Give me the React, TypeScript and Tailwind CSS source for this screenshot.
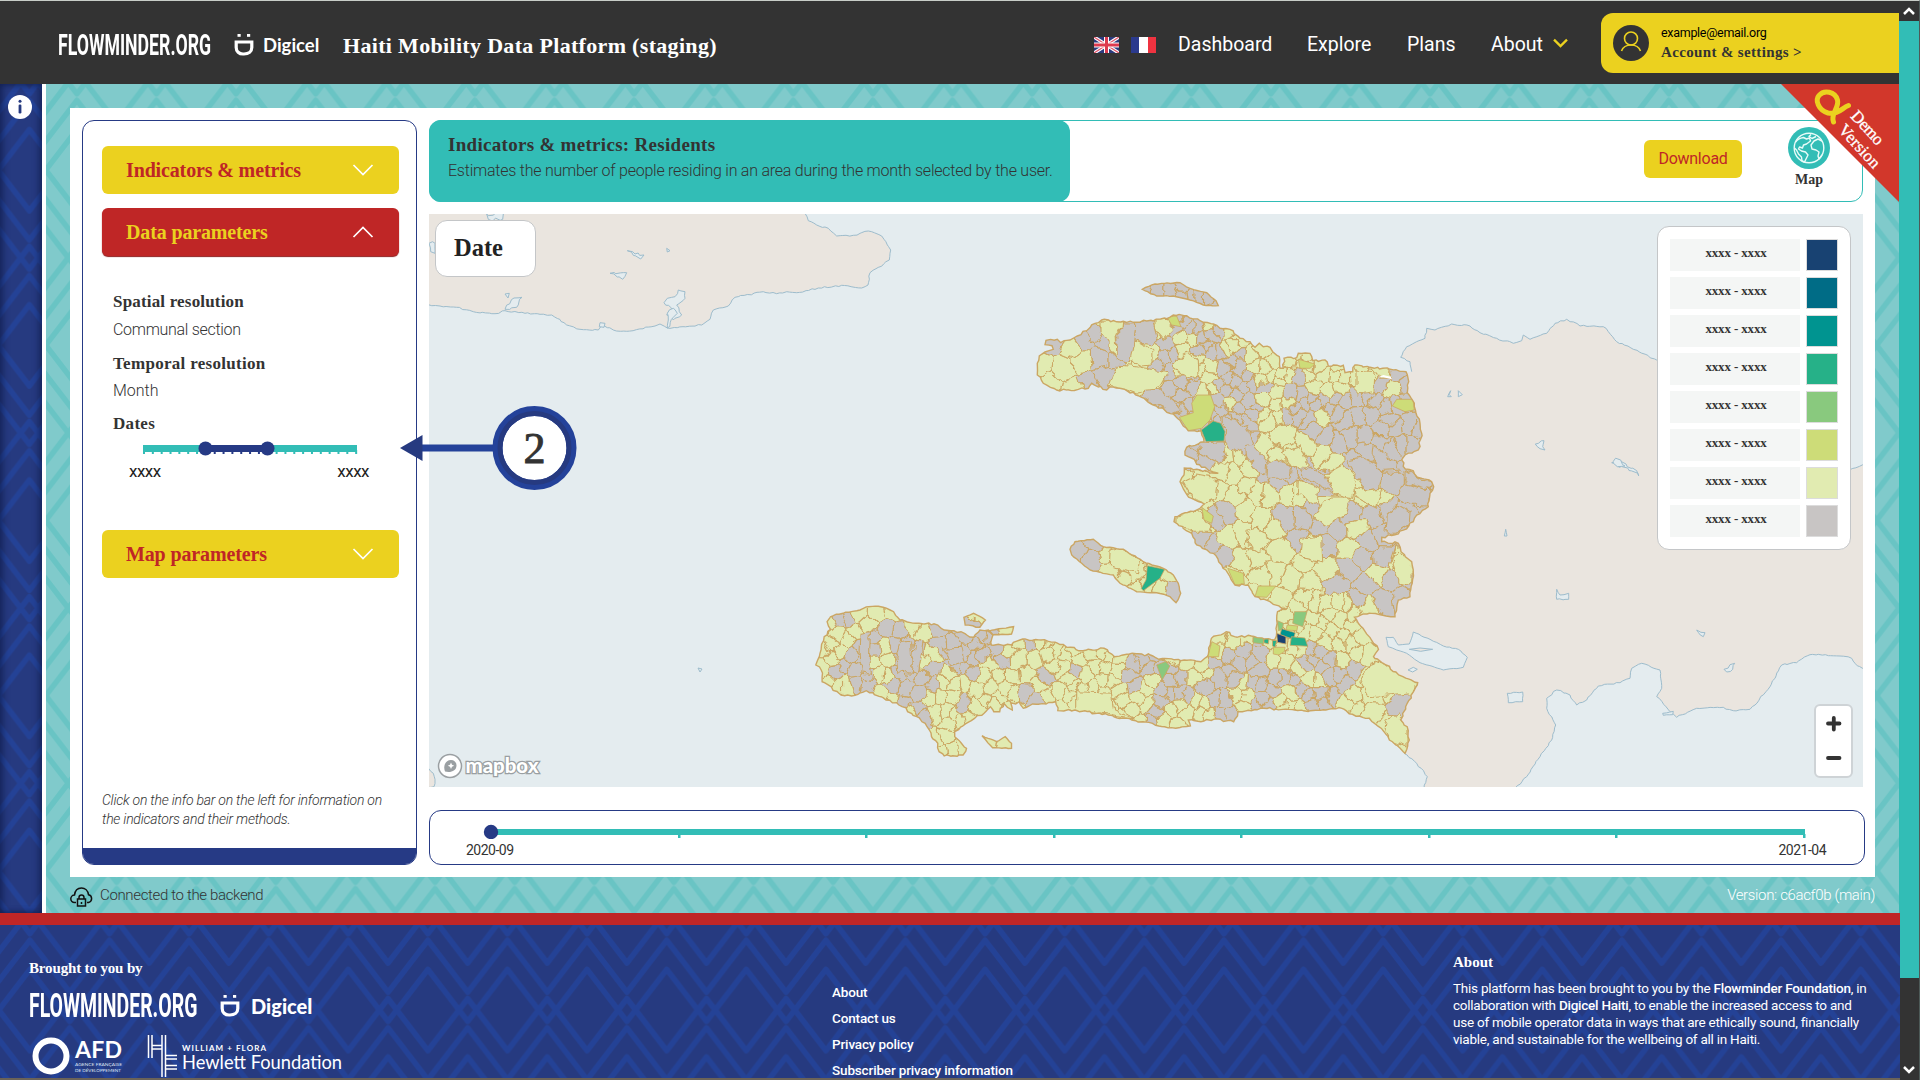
import React from "react";

type Pt = [number, number];

const SERIF = "font-['Liberation_Serif','Noto_Serif',serif]";

/* ---------- deterministic randomness ---------- */
function makeRandom(seed: number) {
  let s = seed >>> 0;
  return () => {
    s = (s + 0x6d2b79f5) >>> 0;
    let t = s;
    t = Math.imul(t ^ (t >>> 15), t | 1);
    t ^= t + Math.imul(t ^ (t >>> 7), t | 61);
    return ((t ^ (t >>> 14)) >>> 0) / 4294967296;
  };
}

const pairs = (s: string): Pt[] => s.trim().split(/\s+/).map((p) => p.split(",").map(Number) as Pt);
const toPath = (pts: Pt[], close = true) => "M" + pts.map((p) => p[0].toFixed(1) + "," + p[1].toFixed(1)).join("L") + (close ? "Z" : "");

/* sheet coordinates -> map pixels */
const north = (s: string): Pt[] => pairs(s).map(([x, y]) => [1000 + x / 3, 260 + y / 3]);
const south = (s: string): Pt[] => pairs(s).map(([x, y]) => [780 + x / 2.3758, 560 + y / 3]);
const west = (s: string): Pt[] => pairs(s).map(([x, y]) => [420 + x / 3, 200 + y / 3]);
const east = (s: string): Pt[] => pairs(s).map(([x, y]) => [1380 + x / 3, 300 + y / 3]);

function roughen(pts: Pt[], seed: number, amp: number, close = true): Pt[] {
  const rnd = makeRandom(seed);
  const out: Pt[] = [];
  const n = close ? pts.length : pts.length - 1;
  for (let i = 0; i < n; i++) {
    const a = pts[i];
    const b = pts[(i + 1) % pts.length];
    const len = Math.hypot(b[0] - a[0], b[1] - a[1]);
    out.push(a);
    const steps = Math.floor(len / 3);
    for (let k = 1; k < steps; k++) {
      const t = k / steps;
      out.push([a[0] + (b[0] - a[0]) * t + (rnd() - 0.5) * amp, a[1] + (b[1] - a[1]) * t + (rnd() - 0.5) * amp]);
    }
  }
  if (!close) out.push(pts[pts.length - 1]);
  return out;
}

/* ---------- outlines ---------- */
const northCoast = north(
  "112,310 118,288 135,276 160,268 156,257 135,254 138,241 172,238 182,248 210,240 232,228 260,212 285,190 305,180 370,184 400,187 440,183 500,176 520,165 560,167 600,182 640,192 660,205 690,208 720,235 750,245 765,262 778,250 790,260 810,262 818,275 838,290 840,325 850,325 852,295 890,293 895,280 930,280 938,302 975,300 985,318 1030,316 1035,338 1058,335 1065,315 1110,322 1170,328 1218,335 1226,365 1222,398 1243,430 1248,460 1260,490 1265,520 1255,570 1215,585 1205,600 1216,627 1240,632 1252,652 1295,665 1301,680 1290,700 1285,740 1250,765 1240,785 1195,822 1145,832 1145,845 1195,850 1203,875 1235,905 1240,940 1230,1010 1195,1020 1185,1070",
);
const southCoast = south(
  "1440,168 1400,160 1365,172 1385,205 1405,240 1422,268 1410,290 1440,315 1470,345 1515,368 1505,395 1490,430 1475,480 1490,500 1495,540 1485,580 1455,545 1435,515 1400,475 1360,463 1335,445 1260,452 1150,445 1088,455 1078,485 1030,478 1000,485 970,480 975,498 940,505 900,498 885,490 845,482 780,465 700,450 660,452 655,425 632,432 600,432 578,445 568,425 560,432 548,428 552,450 540,442 532,430 522,455 508,455 500,440 485,460 450,485 415,515 415,530 443,565 435,585 390,588 378,575 375,550 360,530 355,510 345,490 325,470 290,440 240,410 205,392 170,408 140,400 100,365 98,330 85,315 95,280 105,230 120,208 112,185 120,170 150,160 190,150 210,140 245,142 270,155 285,180 330,190 375,195 390,210 430,215 460,232 475,210 495,210 506,225 502,255 550,255 570,240 620,240 660,250 690,262 720,272 770,265 795,290 830,282 880,285 900,298 960,300 1000,305 1015,290 1025,235 1060,215 1080,230 1120,228 1175,240 1180,215 1180,180 1182,155 1200,145",
);
const gulfCoast = north(
  "845,1045 810,1025 765,1010 745,975 705,975 690,950 665,915 640,880 590,855 575,820 522,785 525,770 600,745 612,732 575,715 555,695 540,665 552,645 553,624 600,630 655,640 640,636 590,613 583,598 555,585 560,562 595,552 612,545 603,512 565,512 545,490 520,462 450,430 425,412 380,392 330,380 320,390 275,370 265,385 235,388 170,390 130,370 112,345",
);
const OUTLINES: Pt[][] = [
  roughen([...northCoast, ...southCoast, ...gulfCoast], 5, 2.2),
  roughen(north("427,88 465,72 540,68 570,85 620,98 648,122 655,137 610,135 570,120 520,108 470,108"), 6, 1),
  roughen(north("210,868 225,845 280,838 310,860 370,868 430,905 490,925 520,945 535,970 542,1000 528,1028 510,1010 470,998 410,995 360,970 340,945 270,930 245,910 215,885"), 7, 1),
  roughen(south("437,172 460,160 488,180 475,202 440,195"), 8, 1),
  roughen(south("492,212 520,206 555,200 550,222 505,224"), 9, 1),
  roughen(south("480,527 515,545 535,530 550,550 550,565 505,563"), 10, 1),
];

const cubaCoast = west(
  "1155,40 1165,62 1190,75 1225,85 1250,108 1300,106 1345,93 1385,108 1412,150 1408,180 1350,218 1344,255 1325,264 1265,256 1195,264 1130,278 1100,275 1070,281 1030,275 945,292 925,318 880,330 870,358 845,375 742,384 720,372 705,378 620,394 580,390 550,376 535,390 480,388 440,375 395,345 360,343 315,340 255,332 225,341 160,335 110,322 60,318 25,314",
);
const cubaLand = [...roughen(cubaCoast, 20, 1.6, false)];

const dominicanNorth = roughen(
  east("95,215 90,185 62,172 80,140 135,115 140,85 165,90 215,72 270,78 300,98 350,115 400,130 425,122 430,105 450,118 500,100 525,70 560,58 600,78 670,80 710,125 760,148 830,180 1000,260 1200,400 1350,530 1412,508 1455,493"),
  21,
  1.6,
  false,
);
const dominicanSouth = roughen(
  east("1455,1112 1425,1090 1415,1075 1380,1068 1290,1064 1250,1088 1205,1095 1170,1160 1125,1215 1110,1228 1060,1232 1030,1222 950,1225 890,1252 870,1235 830,1190 845,1165 840,1110 785,1090 755,1105 750,1135 720,1148 655,1158 620,1200 590,1215 570,1185 530,1170 500,1195 500,1225 527,1275 515,1320 480,1370 440,1430 405,1466"),
  22,
  1.6,
  false,
);
const borderCoast = roughen(east("132,1466 142,1430 110,1390 72,1360"), 23, 1.2, false);
const dominicanLand = [...dominicanNorth, ...dominicanSouth, ...borderCoast, ...east("-20,1220 -100,1100 -100,500 -50,235")];

const LAKES: Pt[][] = [
  roughen(east("18,1012 40,1012 55,1035 88,1032 100,996 150,1018 190,1038 235,1048 262,1072 250,1102 190,1110 120,1088 80,1060 50,1050 25,1040"), 30, 0.8),
  roughen(east("382,1180 428,1176 428,1205 385,1208"), 31, 1),
  roughen(east("530,868 540,885 566,880 566,898 530,898"), 32, 1.4),
  roughen(east("466,432 492,422 488,440 495,450 480,446"), 33, 2),
  roughen(east("695,488 715,478 738,492 770,512 776,528 745,506 718,502"), 34, 4),
  roughen(east("700,484 722,480 735,498 712,500"), 52, 5),
  roughen(east("84,1110 100,1102 112,1108 98,1116"), 35, 0.8),
  roughen(east("1032,1108 1050,1094 1064,1090 1058,1108 1040,1116"), 36, 2.4),
  roughen(east("950,990 975,998 970,1010"), 37, 2),
  roughen(east("848,1240 880,1234 878,1244 850,1246"), 38, 0.8),
  roughen(east("203,290 212,272 208,284 214,290"), 39, 0.8),
  roughen(east("235,272 247,284 235,290"), 40, 0.8),
  roughen(east("373,708 377,688 381,708"), 41, 0.4),
  roughen(west("742,295 765,290 775,270 795,275 795,295 770,315 785,345 760,360 740,345 755,325 732,308"), 42, 2.4),
  roughen(west("742,340 760,325 772,340 760,352 742,384 745,360"), 51, 2.4),
  roughen(west("622,152 645,162 672,165 662,177 640,166"), 43, 3),
  roughen(west("570,220 620,218 608,238"), 44, 2),
  roughen(west("740,145 750,152 742,156"), 45, 1),
  roughen(west("200,42 250,42 248,58 205,58"), 46, 4),
  roughen(west("27,130 45,130 45,160 32,155"), 47, 4),
  roughen(west("282,294 306,292 290,322 255,328"), 48, 3),
  roughen(west("255,282 268,280 264,294"), 49, 2),
  roughen(west("540,368 555,370 552,382 538,380"), 50, 0.8),
];

/* ---------- administrative mesh ---------- */
/* [x, y, radius, share of cells without data] */
const NORTH_ZONES: number[][] = [
  [300, 300, 60, 0.95], [250, 350, 40, 1], [385, 230, 34, 1], [440, 220, 40, 1], [500, 280, 45, 1], [480, 410, 70, 1], [560, 390, 50, 1],
  [540, 215, 30, 0.7], [640, 240, 50, 0.9], [690, 320, 70, 0.85], [690, 430, 60, 0.9], [710, 510, 55, 1], [770, 390, 70, 0.55], [630, 575, 42, 1],
  [830, 640, 60, 1], [890, 440, 50, 0.85], [970, 500, 70, 0.9], [1090, 460, 80, 0.95], [1200, 500, 80, 1], [1205, 370, 30, 1], [1140, 390, 30, 1],
  [1110, 620, 80, 1], [1230, 700, 80, 1], [1190, 770, 60, 1], [940, 650, 50, 1], [890, 780, 60, 0.9], [660, 755, 45, 1], [600, 635, 30, 1],
  [640, 865, 38, 1], [990, 860, 40, 1], [1100, 820, 30, 1], [1170, 880, 40, 1], [1180, 980, 60, 1], [1050, 980, 50, 1], [1070, 910, 30, 1], [870, 930, 30, 1],
  [1080, 750, 40, 1], [240, 870, 50, 1], [515, 990, 26, 1], [540, 100, 90, 1], [190, 320, 65, 0.08], [140, 345, 16, 1], [340, 220, 30, 0], [420, 290, 30, 0], [410, 350, 65, 0],
  [560, 310, 40, 0], [610, 310, 30, 0], [490, 205, 26, 0], [560, 250, 26, 0.1], [620, 375, 30, 0], [700, 240, 45, 0.05], [860, 330, 70, 0.12],
  [960, 340, 60, 0.12], [1100, 350, 50, 0], [1165, 400, 20, 0], [870, 550, 70, 0], [790, 510, 50, 0], [830, 440, 22, 0.1], [1000, 590, 40, 0],
  [1030, 660, 45, 0], [1100, 710, 40, 0], [600, 690, 60, 0], [720, 620, 70, 0.05], [920, 700, 30, 0], [1000, 750, 50, 0], [780, 850, 110, 0], [580, 790, 50, 0],
  [700, 690, 60, 0], [840, 730, 50, 0], [760, 760, 50, 0],
  [930, 960, 70, 0], [1210, 930, 36, 0], [1090, 870, 30, 0], [1110, 945, 30, 0], [400, 930, 90, 0], [1120, 1040, 30, 0], [850, 1000, 60, 0], [1060, 820, 30, 0],
];
const SOUTH_ZONES: number[][] = [
  [155, 185, 24, 0.9], [200, 280, 26, 1], [295, 290, 34, 1], [320, 330, 34, 1], [340, 385, 34, 1], [180, 360, 24, 1], [415, 290, 28, 1],
  [350, 450, 24, 1], [480, 250, 26, 1], [580, 375, 40, 1], [440, 340, 20, 1], [820, 370, 26, 1], [850, 290, 36, 1], [950, 370, 30, 1], [910, 430, 34, 0.9],
  [1070, 300, 36, 1], [1150, 350, 36, 1], [1120, 300, 40, 0.9], [1290, 280, 36, 1], [1340, 350, 34, 1], [1255, 400, 20, 1], [1305, 410, 20, 1], [1480, 440, 26, 1],
  [250, 210, 30, 0.9], [1210, 345, 26, 1], [1050, 430, 26, 1], [1150, 400, 30, 1], [360, 205, 14, 1], [890, 480, 14, 1], [525, 290, 20, 0.9],
  [240, 155, 50, 0], [120, 270, 40, 0.1], [240, 300, 26, 0], [160, 390, 40, 0.1], [350, 290, 20, 0], [400, 440, 60, 0.05], [400, 540, 60, 0], [460, 390, 40, 0.1],
  [600, 290, 80, 0.15], [740, 400, 80, 0], [760, 300, 50, 0.3], [690, 340, 50, 0.1], [870, 400, 30, 0.2], [980, 330, 30, 0.1], [960, 470, 50, 0.1], [1100, 400, 30, 0],
  [1210, 400, 26, 0], [1210, 290, 40, 0.1], [1060, 250, 50, 0], [1350, 220, 80, 0], [1430, 350, 60, 0], [1400, 420, 50, 0], [1460, 520, 60, 0], [520, 400, 50, 0.1], [320, 200, 40, 0.1],
];
const ZONES: number[][] = [
  ...NORTH_ZONES.map(([x, y, r, p]) => [1000 + x / 3, 260 + y / 3, r / 3, p]),
  ...SOUTH_ZONES.map(([x, y, r, p]) => [780 + x / 2.3758, 560 + y / 3, r / 2.7, p]),
];

function spacing(x: number, y: number) {
  if (y < 420 && x > 1165 && x < 1345) return 8.5;
  if (y < 450 && x >= 1345) return 11;
  if (y < 430) return 14;
  if (y < 600) return x < 1240 ? 13.5 : 15;
  if (x > 1370) return 20;
  return 10;
}

function insidePoly(p: Pt, poly: Pt[]) {
  let c = false;
  for (let i = 0, j = poly.length - 1; i < poly.length; j = i++) {
    const a = poly[i];
    const b = poly[j];
    if (a[1] > p[1] !== b[1] > p[1] && p[0] < ((b[0] - a[0]) * (p[1] - a[1])) / (b[1] - a[1]) + a[0]) c = !c;
  }
  return c;
}

function buildCells() {
  const rnd = makeRandom(77);
  const seeds: Pt[] = [];
  for (let i = 0; i < 26000; i++) {
    const p: Pt = [810 + rnd() * 630, 280 + rnd() * 480];
    const d = spacing(p[0], p[1]) * (0.8 + rnd() * 0.5);
    if (seeds.some((q) => Math.hypot((q[0] - p[0]) * 1.15, (q[1] - p[1]) * 0.75) < d)) continue;
    if (!OUTLINES.some((o) => insidePoly(p, o))) continue;
    seeds.push(p);
  }
  return seeds.map((p) => {
    let poly: Pt[] = [[p[0] - 40, p[1] - 40], [p[0] + 40, p[1] - 40], [p[0] + 40, p[1] + 40], [p[0] - 40, p[1] + 40]];
    for (const q of seeds) {
      if (q === p || Math.abs(q[0] - p[0]) > 80 || Math.abs(q[1] - p[1]) > 80) continue;
      const mx = (p[0] + q[0]) / 2;
      const my = (p[1] + q[1]) / 2;
      const nx = q[0] - p[0];
      const ny = q[1] - p[1];
      const side = (v: Pt) => (v[0] - mx) * nx + (v[1] - my) * ny;
      const next: Pt[] = [];
      for (let i = 0; i < poly.length; i++) {
        const a = poly[i];
        const b = poly[(i + 1) % poly.length];
        const sa = side(a);
        const sb = side(b);
        if (sa <= 0) next.push(a);
        if (sa <= 0 !== sb <= 0) {
          const t = sa / (sa - sb);
          next.push([a[0] + (b[0] - a[0]) * t, a[1] + (b[1] - a[1]) * t]);
        }
      }
      poly = next;
    }
    let best = 1e9;
    let share = 0.2;
    for (const z of ZONES) {
      const d = Math.hypot(z[0] - p[0], z[1] - p[1]) / z[2];
      if (d < best) {
        best = d;
        share = z[3];
      }
    }
    return { d: toPath(poly), empty: rnd() < share };
  });
}
const CELLS = buildCells();

const HIGHLIGHTS: { d: string; fill: string }[] = [
  { fill: "#e1ebb1", d: toPath(north("350,316 390,318 460,328 505,335 480,378 410,402 380,390 325,378")) },
  { fill: "#e1ebb1", d: toPath(north("303,182 368,185 366,205 348,220 350,270 362,302 345,285 325,250 303,215")) },
  { fill: "#e1ebb1", d: toPath(north("396,245 420,250 440,262 455,275 457,315 420,318 388,300")) },
  { fill: "#e1ebb1", d: toPath(north("530,298 562,280 592,300 594,345 560,356 520,325")) },
  { fill: "#e1ebb1", d: toPath(north("465,180 500,178 515,208 490,235 465,205")) },
  { fill: "#c8c5c4", d: toPath(north("368,188 408,190 402,245 388,310 352,295 350,222 368,205")) },
  { fill: "#c8c5c4", d: toPath(north("408,188 458,184 474,238 455,255 402,245")) },
  { fill: "#c8c5c4", d: toPath(north("435,388 475,385 520,420 545,450 518,462 455,430 424,410")) },
  { fill: "#c8c5c4", d: toPath(north("672,470 700,475 740,500 758,550 735,588 675,550")) },
  { fill: "#c8c5c4", d: toPath(north("595,550 672,545 680,590 655,610 600,580")) },
  { fill: "#c8c5c4", d: toPath(north("736,560 760,555 800,600 798,645 775,635 740,590")) },
  { fill: "#c8c5c4", d: toPath(north("825,595 875,620 870,655 800,655 805,605")) },
  { fill: "#c8c5c4", d: toPath(north("930,615 1000,665 998,695 905,650 905,635")) },
  { fill: "#c8c5c4", d: toPath(north("1205,670 1290,690 1285,738 1235,735 1188,715")) },
  { fill: "#c8c5c4", d: toPath(north("1215,630 1250,652 1295,665 1290,690 1215,668")) },
  { fill: "#c8c5c4", d: toPath(north("1195,735 1230,755 1228,795 1195,820 1158,820 1162,765")) },
  { fill: "#c8c5c4", d: toPath(north("1145,640 1210,640 1210,675 1185,712 1140,685")) },
  { fill: "#c8c5c4", d: toPath(north("1120,555 1180,600 1205,630 1140,635 1115,595")) },
  { fill: "#c8c5c4", d: toPath(north("1040,600 1085,590 1130,615 1145,640 1135,685 1100,690 1070,650")) },
  { fill: "#e1ebb1", d: toPath(north("548,665 590,645 640,655 655,670 648,715 610,730 575,712")) },
  { fill: "#e1ebb1", d: toPath(north("975,645 1030,615 1070,655 1058,715 1000,700")) },
  { fill: "#e1ebb1", d: toPath(north("940,770 990,710 1052,712 1035,765 970,800")) },
  { fill: "#e1ebb1", d: toPath(north("845,575 905,555 925,610 900,632 868,612")) },
  { fill: "#e1ebb1", d: toPath(north("895,660 960,685 950,738 892,705")) },
  { fill: "#e1ebb1", d: toPath(north("745,810 775,805 812,835 795,865 775,872 740,850")) },
  { fill: "#e1ebb1", d: toPath(north("905,835 965,828 968,905 900,888")) },
  { fill: "#e1ebb1", d: toPath(north("1068,330 1125,335 1122,395 1068,402")) },
  { fill: "#e1ebb1", d: toPath(north("1062,680 1100,690 1145,685 1130,745 1065,712")) },
  { fill: "#e1ebb1", d: toPath(north("1195,870 1235,905 1232,975 1198,970 1175,900")) },
  { fill: "#e1ebb1", d: toPath(north("525,768 600,755 635,800 630,820 580,820 525,788")) },
  { fill: "#e1ebb1", d: toPath(north("330,875 370,868 425,905 418,938 328,920")) },
  { fill: "#e1ebb1", d: toPath(south("1395,320 1420,300 1515,368 1500,398 1400,410 1380,360")) },
  { fill: "#e1ebb1", d: toPath(south("1440,475 1470,465 1492,500 1492,560 1450,545 1435,510")) },
  { fill: "#e1ebb1", d: toPath(south("705,395 790,400 795,450 840,478 705,450")) },
  { fill: "#c8c5c4", d: toPath(south("190,220 215,215 212,310 215,340 190,335 188,270")) },
  { fill: "#c8c5c4", d: toPath(south("285,245 310,240 315,340 280,335 275,290")) },
  { fill: "#c8c5c4", d: toPath(south("320,240 340,245 328,345 312,338")) },
  { fill: "#c8c5c4", d: toPath(south("388,265 430,262 438,305 405,320 402,290")) },
  { fill: "#cddc78", d: toPath(north("590,405 632,405 644,440 630,480 605,505 565,512 538,472 580,458 575,430")) },
  { fill: "#26b188", d: toPath(north("640,483 662,490 675,515 672,543 618,545 604,510")) },
  { fill: "#cddc78", d: toPath(north("1190,418 1240,418 1243,450 1215,455 1177,438")) },
  { fill: "#cddc78", d: toPath(north("500,170 530,168 543,200 515,195")) },
  { fill: "#cddc78", d: toPath(north("895,298 945,312 930,325 900,325")) },
  { fill: "#cddc78", d: toPath(north("605,742 640,768 635,790 612,780")) },
  { fill: "#cddc78", d: toPath(north("683,925 730,940 733,972 705,975")) },
  { fill: "#cddc78", d: toPath(north("775,978 828,978 800,1012 765,1010")) },
  { fill: "#26b188", d: toPath(north("442,917 494,928 480,955 430,992 424,985 438,960")) },
  { fill: "#89c97e", d: toPath(south("1222,155 1252,155 1242,200 1218,190")) },
  { fill: "#89c97e", d: toPath(south("1182,182 1196,190 1194,208 1184,212")) },
  { fill: "#cddc78", d: toPath(south("1205,195 1230,198 1228,212 1202,210")) },
  { fill: "#009490", d: toPath(south("1192,206 1224,218 1220,238 1188,224")) },
  { fill: "#184272", d: toPath(south("1180,220 1202,230 1202,252 1182,247")) },
  { fill: "#26b188", d: toPath(south("1215,230 1247,234 1254,259 1212,256")) },
  { fill: "#26b188", d: toPath(south("1150,228 1162,232 1160,252 1150,248")) },
  { fill: "#26b188", d: toPath(south("1170,240 1180,242 1176,262 1170,258")) },
  { fill: "#89c97e", d: toPath(south("1124,228 1150,230 1148,252 1124,248")) },
  { fill: "#cddc78", d: toPath(south("1172,262 1200,262 1198,275 1185,285 1172,282")) },
  { fill: "#cddc78", d: toPath(south("1026,245 1045,258 1042,290 1016,290")) },
  { fill: "#89c97e", d: toPath(south("895,315 916,305 926,318 908,360")) },
];

const BIG = HIGHLIGHTS.filter((h) => h.fill === "#e1ebb1" || h.fill === "#c8c5c4");
const TINTED = HIGHLIGHTS.filter((h) => h.fill !== "#e1ebb1" && h.fill !== "#c8c5c4");

function HaitiMap() {
  return (
    <svg className="block h-[573px] w-[1434px]" viewBox="429 214 1434 573">
      <defs>
        <clipPath id="haiti">
          {OUTLINES.map((o, i) => (
            <path key={i} d={toPath(o)} />
          ))}
        </clipPath>
        <filter id="wobble" x="0" y="0" width="1" height="1">
          <feTurbulence type="fractalNoise" baseFrequency="0.11" numOctaves="2" seed="4" />
          <feDisplacementMap in="SourceGraphic" scale="9" xChannelSelector="R" yChannelSelector="G" />
        </filter>
      </defs>
      <rect x="429" y="214" width="1434" height="573" fill="#e4ecef" />
      <path d={toPath([...cubaLand, [425, 304], [425, 205], [805, 205]])} fill="#eae5df" stroke="#9dbccc" />
      <path d={toPath(dominicanLand)} fill="#eae5df" />
      <path d={toPath(roughen(west("20,1700 40,1720 45,1738 42,1760 20,1762"), 60, 1.5))} fill="#eae5df" stroke="#9dbccc" />
      {[dominicanNorth, dominicanSouth, borderCoast].map((c, i) => (
        <path key={i} d={toPath(c, false)} fill="none" stroke="#9dbccc" />
      ))}
      {LAKES.map((l, i) => (
        <path key={i} d={toPath(l)} fill="#e4ecef" stroke="#9dbccc" />
      ))}
      <path d={toPath(east("88,1048 120,1044 158,1048 122,1054"))} fill="#eae5df" stroke="#9dbccc" />
      <path d="M698 668l4 1-2 3zM960 638l4 1-1 3z" fill="none" stroke="#9dbccc" />
      <g clipPath="url(#haiti)">
        <g filter="url(#wobble)">
          <rect x="800" y="270" width="650" height="500" fill="#e1ebb1" />
          {CELLS.map((c, i) => (
            <path key={i} d={c.d} fill={c.empty ? "#c8c5c4" : "#e1ebb1"} stroke="#cba663" strokeWidth="1.1" />
          ))}
          {BIG.map((h, i) => (
            <path key={i} d={h.d} fill={h.fill} stroke="#cba663" strokeWidth="1.1" />
          ))}
        </g>
        {TINTED.map((h, i) => (
          <path key={i} d={h.d} fill={h.fill} stroke="#cba663" strokeWidth="0.8" strokeLinejoin="round" />
        ))}
      </g>
      {OUTLINES.map((o, i) => (
        <path key={i} d={toPath(o)} fill="none" stroke="#cba663" strokeWidth="1.4" />
      ))}
      <path d={toPath(north("1135,352 1150,345 1172,350 1176,358 1150,352"))} fill="#fff" />
    </svg>
  );
}

/* ---------- zigzag backdrop ---------- */
function Zigzag({ id, color, x, y }: { id: string; color: string; x: number; y: number }) {
  const W = 79.6;
  const S = 29.2;
  const A = 52;
  let d = "";
  for (let k = 0; k < 9; k++) {
    const v = k * S;
    const flip = Math.floor(k / 3) % 2 === 1;
    d += flip
      ? `M${-W / 2},${v - A}L0,${v}L${W / 2},${v - A}L${W},${v}L${W * 1.5},${v - A}`
      : `M${-W / 2},${v}L0,${v - A}L${W / 2},${v}L${W},${v - A}L${W * 1.5},${v}`;
  }
  return (
    <svg className="absolute inset-0 h-full w-full">
      <defs>
        <pattern id={id} width={W} height={S * 6} patternUnits="userSpaceOnUse" patternTransform={`translate(${x} ${y})`}>
          <path d={d} fill="none" stroke={color} strokeWidth="5.5" strokeLinejoin="round" />
        </pattern>
      </defs>
      <rect width="100%" height="100%" fill={`url(#${id})`} />
    </svg>
  );
}

/* ---------- logos and icons ---------- */
function Flowminder({ className }: { className: string }) {
  return (
    <div className={"shrink-0 overflow-visible whitespace-nowrap font-['Roboto',sans-serif] font-bold text-white " + className}>
      <span className="inline-block origin-left scale-x-[0.59]">FLOWMINDER.ORG</span>
    </div>
  );
}

function DigicelMark({ className }: { className: string }) {
  return (
    <svg className={className} viewBox="0 0 20 22" fill="none">
      <path d="M2.2 8h15.6v5.500c0 4-3.300 6.500-7.800 6.500H9c-3.900 0-6.800-2.500-6.800-6.500z" stroke="#fff" strokeWidth="3.2" />
      <rect x="3.500" y="0" width="3.200" height="2.800" fill="#fff" />
      <rect x="13" y="0" width="3.200" height="2.800" fill="#fff" />
    </svg>
  );
}

function Chevron({ up, className, weight = 1.7 }: { up?: boolean; className: string; weight?: number }) {
  return (
    <svg className={className} viewBox="0 0 22 12" fill="none">
      <path d={up ? "M1.500 11L11 1.500L20.500 11" : "M1.500 1L11 10.500L20.500 1"} stroke="currentColor" strokeWidth={weight} />
    </svg>
  );
}

function UnionJack() {
  return (
    <svg className="h-4 w-[25px]" viewBox="0 0 50 32">
      <rect width="50" height="32" fill="#2b3a7d" />
      <path d="M0 0L50 32M50 0L0 32" stroke="#fff" strokeWidth="7" />
      <path d="M0 0L50 32M50 0L0 32" stroke="#e0566b" strokeWidth="2.500" />
      <path d="M25 0V32M0 16H50" stroke="#fff" strokeWidth="10" />
      <path d="M25 0V32M0 16H50" stroke="#dd3a4f" strokeWidth="6" />
    </svg>
  );
}

function Globe() {
  return (
    <svg className="h-[42px] w-[42px]" viewBox="0 0 42 42" fill="none">
      <circle cx="21" cy="21" r="21" fill="#32bdb6" />
      <g stroke="#e8fbf8" strokeWidth="1.400" strokeLinejoin="round">
        <circle cx="21" cy="21" r="14.800" />
        <path d="M7.500 15c2-3 5-4 8-4.500l3 1.500 3-1 1 3-4 3-3 1-1 3-3-1-1 2 3 2 4 1 2.500 3-1.500 3-2 4-2.500-1-.5-4-3-3-2-4-2-2" />
        <path d="M34 14l-4-2-4 2-3 4 1 4 4 1 3 2-1 4 1 3 3-4M23 7.500l-2 2 3 2 4-2" />
      </g>
    </svg>
  );
}

function Accordion({ label, open }: { label: string; open?: boolean }) {
  return (
    <div
      className={
        "flex h-12 w-[297px] items-center justify-between rounded-md pb-px pl-6 pr-[25px] " +
        (open ? "bg-[#bf2626] text-[#ebd11f] shadow-[0_1px_1px_#8f1c1c]" : "bg-[#ebd11f] text-[#bf2626]")
      }
    >
      <span className={SERIF + " whitespace-nowrap text-[20px] font-bold tracking-[-0.14px]"}>{label}</span>
      <Chevron up={open} className="h-3 w-[22px] text-white" />
    </div>
  );
}

const LEGEND = ["#184272", "#006c86", "#009490", "#26b188", "#89c97e", "#cddc78", "#e1ebb1", "#c8c5c4"];

function Header() {
  return (
    <header className="flex h-[84px] w-[1899px] items-center border-t border-[#c8cdc8] bg-[#333333] text-white">
      <Flowminder className="ml-[58px] mt-[5px] w-[152px] text-[30px] leading-[44px]" />
      <div className="ml-6 mt-[5px] flex items-center gap-[9px]">
        <DigicelMark className="h-[22px] w-5" />
        <span className="w-[66px] font-['Lato',sans-serif] text-[18.5px] font-bold leading-none">Digicel</span>
      </div>
      <h1 className={SERIF + " ml-[14px] mt-[5px] w-[751px] whitespace-nowrap text-[22px] font-bold tracking-[0.32px]"}>Haiti Mobility Data Platform (staging)</h1>
      <nav className="mt-[5px] flex items-center text-[19.5px]">
        <UnionJack />
        <div className="ml-3 flex h-4 w-[25px]">
          <span className="flex-1 bg-[#2b3a8d]" />
          <span className="flex-1 bg-white" />
          <span className="flex-1 bg-[#ef3340]" />
        </div>
        <span className="ml-[22px] w-[129px]">Dashboard</span>
        <span className="w-[100px]">Explore</span>
        <span className="w-[84px]">Plans</span>
        <span className="w-[62px]">About</span>
        <Chevron weight={3.4} className="mb-1 h-[10px] w-[15px] text-[#ebd11f]" />
      </nav>
      <div className="ml-auto flex h-[60px] w-[298px] items-center gap-3 rounded-l-[12px] bg-[#ebd11f] pl-3 text-[#333]">
        <svg className="h-9 w-9" viewBox="0 0 36 36" fill="none">
          <circle cx="18" cy="18" r="18" fill="#333" />
          <circle cx="18" cy="13.500" r="6.500" stroke="#ebd11f" strokeWidth="1.600" />
          <path d="M8.500 26c1.500-4 5-6 9.500-6s8 2 9.500 6" stroke="#ebd11f" strokeWidth="1.600" />
        </svg>
        <div className="leading-none">
          <div className="text-[12.5px] leading-[18px] tracking-[-0.3px] text-black">example@email.org</div>
          <div className={SERIF + " whitespace-nowrap text-[15px] font-bold leading-[20px] tracking-[0.35px]"}>Account &amp; settings &gt;</div>
        </div>
      </div>
    </header>
  );
}

function ParametersCard() {
  return (
    <section className="relative flex h-[745px] w-[335px] shrink-0 flex-col overflow-hidden rounded-[12px] border border-[#263a85] bg-white px-[19px] pt-[25px] text-[#333]">
      <Accordion label="Indicators & metrics" />
      <div className="mt-[14px]">
        <Accordion label="Data parameters" open />
      </div>
      <div className="flex h-[274px] flex-col pl-[11px] pt-[34px]">
        <h3 className={SERIF + " text-[17px] font-bold leading-6 tracking-[0.18px]"}>Spatial resolution</h3>
        <p className="mt-[2px] text-[16px] font-light leading-7 tracking-[-0.3px]">Communal section</p>
        <h3 className={SERIF + " mt-2 text-[17px] font-bold leading-6 tracking-[0.3px]"}>Temporal resolution</h3>
        <p className="mt-px text-[16px] font-light leading-7">Month</p>
        <h3 className={SERIF + " mt-[7px] text-[17px] font-bold leading-6 tracking-[0.3px]"}>Dates</h3>
        <svg className="ml-[20px] mt-px h-6 w-[234px] shrink-0" viewBox="133 438 234 24">
          <rect x="143" y="446" width="214" height="7" fill="#32bdb6" />
          {Array.from({ length: 25 }, (_, i) => (
            <rect key={i} x={143 + i * 8.84} y="451" width="2" height="4" fill={i > 7 && i < 14 ? "#263a85" : "#32bdb6"} />
          ))}
          <rect x="205" y="446" width="62" height="7" fill="#263a85" />
          <circle cx="205.500" cy="449.500" r="7" fill="#263a85" />
          <circle cx="267.500" cy="449.500" r="7" fill="#263a85" />
        </svg>
        <div className="-mt-[2px] ml-4 flex w-[240px] justify-between text-[17px] leading-6 tracking-[-0.5px] text-[#222]">
          <span>xxxx</span>
          <span>xxxx</span>
        </div>
      </div>
      <Accordion label="Map parameters" />
      <p className="mt-auto whitespace-nowrap pb-[19px] text-[14px] font-light italic leading-[19px] tracking-[-0.23px]">
        Click on the info bar on the left for information on
        <br />
        the indicators and their methods.
      </p>
      <div className="-mx-5 h-[16px] shrink-0 bg-[#263a85]" />
    </section>
  );
}

function MapPanel() {
  return (
    <div className="relative mt-3 h-[573px] w-[1434px]">
      <HaitiMap />
      <div className={SERIF + " absolute left-[6px] top-[6px] flex h-[57px] w-[101px] items-center rounded-[12px] border border-[#c4c6c8] bg-white pl-[18px] text-[24.5px] font-bold text-[#222]"}>Date</div>
      <div className="absolute left-[1228px] top-3 flex w-[194px] flex-col gap-[6px] rounded-[12px] border border-[#c4c6c8] bg-white px-3 py-3">
        {LEGEND.map((c) => (
          <div key={c} className="flex h-8 items-center gap-[6px]">
            <span className={SERIF + " flex h-8 w-[130px] items-center justify-center bg-[#f4f6f5] pb-1 pl-[2px] text-[13px] font-bold tracking-[-0.15px] text-[#333]"}>xxxx - xxxx</span>
            <span className="h-8 w-8 border border-[#dcdcdc]" style={{ backgroundColor: c }} />
          </div>
        ))}
      </div>
      <div className="absolute left-[1385px] top-[490px] flex h-[74px] w-[39px] flex-col rounded-md border-2 border-[#ced3d6] bg-white">
        <svg viewBox="0 0 35 70" fill="none" className="h-full w-full">
          <path d="M12 17.500h11.500M17.800 12v11.500M12 52h11.500" stroke="#333" strokeWidth="3.800" strokeLinecap="round" />
        </svg>
      </div>
      <svg className="absolute left-[7px] top-[537px] h-7 w-[110px]" viewBox="436 751 110 28">
        <circle cx="450" cy="766" r="11.500" fill="#fff" stroke="#9a9fa2" strokeWidth="1.500" />
        <path d="M445 771.500c-2-5 0-11.500 6-11.500 3.500 0 5.500 2.500 5.500 5.500 0 5.500-6 7.500-11.500 6z" fill="#9a9fa2" />
        <path d="M451 762.500l1 2.200 2.200 1-2.200 1-1 2.200-1-2.200-2.200-1 2.200-1z" fill="#fff" />
        <text x="465.500" y="772.500" textLength="73" lengthAdjust="spacingAndGlyphs" fontFamily="Lato" fontWeight="900" fontSize="21" fill="#fff" stroke="#9a9fa2" strokeWidth="2.600" paintOrder="stroke">
          mapbox
        </text>
      </svg>
    </div>
  );
}

function Main() {
  return (
    <main className="relative flex h-[829px] w-[1899px] overflow-hidden">
      <aside className="relative w-[42px] shrink-0 bg-[#263a80]">
        <Zigzag id="zz-side" color="#244296" x={-10.4} y={126.8} />
        <div className="absolute inset-0 shadow-[inset_3px_0_6px_rgba(10,20,60,0.5),inset_-3px_0_6px_rgba(10,20,60,0.5)]" />
        <svg className="relative ml-2 mt-[11px] h-6 w-6" viewBox="0 0 24 24">
          <circle cx="12" cy="12" r="12" fill="#fff" />
          <circle cx="12" cy="6.200" r="1.500" fill="#263a80" />
          <rect x="10.600" y="9.500" width="2.800" height="9" rx="1.200" fill="#263a80" />
        </svg>
      </aside>
      <div className="w-1 shrink-0 bg-white" />
      <div className="relative flex-1 bg-[#80cacb] pl-6 pt-6">
        <Zigzag id="zz-main" color="#69c4c4" x={70.7} y={126.7} />
        <div className="relative flex h-[769px] w-[1805px] gap-3 bg-white p-3">
          <ParametersCard />
          <div className="w-[1436px] shrink-0">
            <div className="flex h-[82px] w-[1434px] items-center rounded-[12px] border border-[#32bdb6] bg-white">
              <div className="-ml-px flex h-[82px] w-[641px] shrink-0 flex-col justify-center rounded-[12px] bg-[#32bdb6] pb-[6px] pl-[19px] text-[#333]">
                <h2 className={SERIF + " whitespace-nowrap text-[19px] font-bold leading-[26px] tracking-[0.3px]"}>Indicators &amp; metrics: Residents</h2>
                <p className="whitespace-nowrap text-[16px] font-light leading-[26px] tracking-[-0.235px]">
                  Estimates the number of people residing in an area during the month selected by the user.
                </p>
              </div>
              <button className="mb-[5px] ml-[574px] h-[38px] w-[98px] shrink-0 rounded-md bg-[#ebd11f] text-[16px] tracking-[-0.25px] text-[#bf2626]">Download</button>
              <div className="ml-[46px] flex flex-col items-center pb-[6px]">
                <Globe />
                <span className={SERIF + " mt-px text-[14px] font-bold leading-5 text-[#333]"}>Map</span>
              </div>
            </div>
            <MapPanel />
            <div className="mt-[23px] h-[55px] w-[1436px] rounded-[12px] border border-[#263a85]">
              <svg className="block h-7 w-full" viewBox="430 811 1434 28">
                <rect x="491" y="829" width="1314" height="6" fill="#32bdb6" />
                {[678, 865, 1053, 1240, 1428, 1615, 1803].map((x) => (
                  <rect key={x} x={x} y="834" width="2.500" height="4" fill="#32bdb6" />
                ))}
                <circle cx="491" cy="832" r="7.200" fill="#263a85" />
              </svg>
              <div className="flex justify-between pl-9 pr-[38px] text-[14px] leading-[22px] tracking-[-0.5px] text-[#333]">
                <span>2020-09</span>
                <span>2021-04</span>
              </div>
            </div>
          </div>
        </div>
        <div className="relative flex h-9 w-[1805px] items-center justify-between font-light">
          <div className="flex items-center gap-[7px] text-[#333]">
            <svg className="mt-1 h-5 w-[23px]" viewBox="0 0 23 20" fill="none" stroke="#111" strokeWidth="1.500">
              <path d="M6 15.500H4.500a3.700 3.700 0 0 1 0-7.400C5 3.500 8 1 11.500 1s6.500 2.500 7 6.700a4 4 0 0 1 0 7.800H17" />
              <rect x="7.500" y="12" width="8" height="7" />
              <path d="M9 12v-1.500a2.500 2.500 0 0 1 5 0V12M11.500 15v2" />
            </svg>
            <span className="text-[15px] tracking-[-0.35px]">Connected to the backend</span>
          </div>
          <span className="text-[15px] tracking-[-0.35px] text-white">Version: c6acf0b (main)</span>
        </div>
      </div>

      <svg className="absolute left-[1781px] top-0 h-[118px] w-[118px]" viewBox="1781 84 118 118">
        <path d="M1781 84H1899V202z" fill="#d2372b" />
        <path
          d="M1848.500 105.500C1842 108 1838 115 1828 113C1818 110 1815 100 1819 95.500C1824 89.500 1835 91.500 1837.500 100C1839.500 108 1830 114 1833.500 122"
          fill="none"
          stroke="#ebd11f"
          strokeWidth="5"
          strokeLinecap="round"
        />
        <g fill="#fff" fontFamily="Liberation Serif" fontSize="17" textAnchor="middle" stroke="#fff" strokeWidth="0.300">
          <text transform="translate(1863.500 131.500) rotate(47)" textLength="40">Demo</text>
          <text transform="translate(1855.500 150) rotate(47)" textLength="53">Version</text>
        </g>
      </svg>

      <svg className="absolute left-[396px] top-[318px] h-24 w-[190px]" viewBox="396 402 190 96">
        <rect x="420" y="444.500" width="76" height="7" fill="#24429a" />
        <path d="M400 448L422.500 435V461z" fill="#263a80" />
        <circle cx="534.500" cy="448" r="37" fill="#fff" stroke="#24429a" strokeWidth="10" />
        <circle cx="534.500" cy="448" r="34.500" fill="none" stroke="#263a80" strokeWidth="5" />
        <text x="534.500" y="463" textAnchor="middle" fontFamily="Liberation Serif" fontSize="44" fill="#333" stroke="#333" strokeWidth="0.900">
          2
        </text>
      </svg>
    </main>
  );
}

function Footer() {
  return (
    <footer className="relative h-[167px] w-[1900px] overflow-hidden border-b-2 border-t-[12px] border-b-[#6b6358] border-t-[#bf2626] bg-[#263a80] text-white">
      <Zigzag id="zz-foot" color="#244296" x={29.9} y={38} />
      <div className="relative flex">
        <div className="w-[803px] shrink-0 pl-[29px] pt-[33px]">
          <h4 className={SERIF + " text-[15px] font-bold leading-5 tracking-[-0.15px]"}>Brought to you by</h4>
          <div className="mt-[6px] flex h-[44px] items-center">
            <Flowminder className="w-[191px] text-[33px]" />
            <DigicelMark className="h-6 w-5" />
            <span className="ml-[11px] font-['Lato',sans-serif] text-[20px] font-black">Digicel</span>
          </div>
          <div className="mt-[6px] flex">
            <svg className="h-[44px] w-[96px] shrink-0" viewBox="28 1034 96 44">
              <circle cx="50" cy="1056" r="15.500" fill="none" stroke="#fff" strokeWidth="6" />
              <text x="74" y="1058" textLength="47" fontFamily="Lato" fontWeight="700" fontSize="23" fill="#fff">AFD</text>
              <g fontFamily="Lato" fontSize="4.500" fill="#dfe4f2">
                <text x="74" y="1065.500" textLength="47" lengthAdjust="spacingAndGlyphs">AGENCE FRANÇAISE</text>
                <text x="74" y="1072" textLength="46" lengthAdjust="spacingAndGlyphs">DE DÉVELOPPEMENT</text>
              </g>
            </svg>
            <svg className="ml-[22px] h-[44px] w-[204px] shrink-0" viewBox="146 1034 204 44">
              <g stroke="#fff" strokeWidth="1.500" fill="none">
                <path d="M147.500 1035V1058M151 1035V1058M161 1035V1077M164.500 1035V1077M151 1045.500H161M151 1049H161M164.500 1055.500H176M164.500 1059H176M164.500 1065.500H176M164.500 1069H176" />
              </g>
              <text x="181" y="1051" textLength="84" fontFamily="Lato" fontWeight="700" fontSize="8" fill="#fff">WILLIAM + FLORA</text>
              <text x="181" y="1068.500" textLength="160" lengthAdjust="spacingAndGlyphs" fontFamily="Lato" fontSize="18.500" fill="#fff">Hewlett Foundation</text>
            </svg>
          </div>
        </div>
        <ul className="w-[621px] shrink-0 pl-[29px] pt-[54px] text-[13.5px] font-medium leading-[26px] tracking-[-0.15px]">
          <li>About</li>
          <li>Contact us</li>
          <li>Privacy policy</li>
          <li>Subscriber privacy information</li>
        </ul>
        <div className="pl-[29px] pt-[27px]">
          <h4 className={SERIF + " text-[15px] font-bold leading-5"}>About</h4>
          <p className="mt-2 whitespace-nowrap text-[13.5px] leading-[17px] tracking-[-0.24px]">
            This platform has been brought to you by the <b className="font-medium">Flowminder Foundation</b>, in
            <br />
            collaboration with <b className="font-medium">Digicel Haiti</b>, to enable the increased access to and
            <br />
            use of mobile operator data in ways that are ethically sound, financially
            <br />
            viable, and sustainable for the wellbeing of all in Haiti.
          </p>
        </div>
      </div>
    </footer>
  );
}

export default function App() {
  return (
    <div className="flex h-[1080px] w-[1920px] overflow-hidden bg-[#333] font-['Roboto',sans-serif]">
      <div className="w-[1899px] shrink-0">
        <Header />
        <Main />
        <Footer />
      </div>
      <div className="flex w-[21px] flex-col items-center border-r border-t border-r-[#4d5a58] border-t-[#c8cdc8] bg-[#333]">
        <svg className="h-5 w-full shrink-0" viewBox="0 0 20 20" fill="none">
          <path d="M5 13l5-5 5 5" stroke="#fff" strokeWidth="2.500" />
        </svg>
        <div className="h-[957px] w-full shrink-0 bg-[#32bdb6]" />
        <svg className="mt-auto h-5 w-full shrink-0" viewBox="0 0 20 20" fill="none">
          <path d="M5 7l5 5 5-5" stroke="#fff" strokeWidth="2.500" />
        </svg>
      </div>
    </div>
  );
}
